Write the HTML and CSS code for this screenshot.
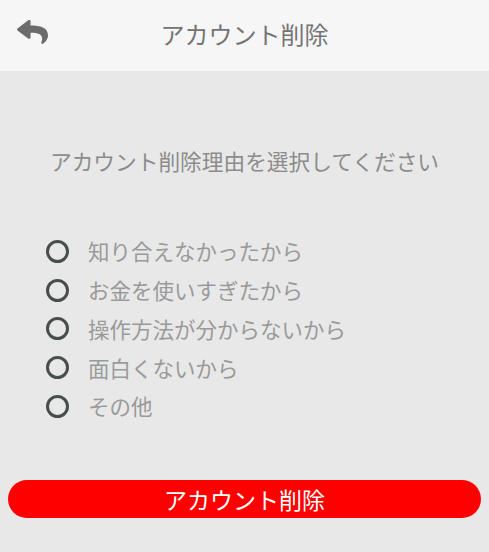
FILE: index.html
```html
<!DOCTYPE html>
<html lang="ja">
<head>
<meta charset="utf-8">
<link rel="stylesheet" href="styles.css">
</head>
<body>
<div class="app">
  <header class="header">
    <div class="back">
      <svg class="back-icon" viewBox="0 31 512 450" width="31" height="24" preserveAspectRatio="none" aria-hidden="true">
        <path fill="#6b6b6b" d="M8.309 189.836L184.313 37.851C199.719 24.546 224 35.347 224 56.015v80.053c160.629 1.839 288 34.032 288 186.258 0 61.441-39.581 122.309-83.333 154.132-13.653 9.931-33.111-2.533-28.077-18.631 45.344-145.012-21.507-183.51-176.59-185.742V360c0 20.7-24.3 31.453-39.687 18.164l-176.004-152c-11.071-9.562-11.086-26.753 0-36.328z"/>
      </svg>
    </div>
    <h1 class="title">アカウント削除</h1>
    <div class="spacer"></div>
  </header>
  <main class="content">
    <p class="prompt">アカウント削除理由を選択してください</p>
    <ul class="options">
      <li class="option"><span class="radio"></span><span class="label">知り合えなかったから</span></li>
      <li class="option"><span class="radio"></span><span class="label">お金を使いすぎたから</span></li>
      <li class="option"><span class="radio"></span><span class="label">操作方法が分からないから</span></li>
      <li class="option"><span class="radio"></span><span class="label">面白くないから</span></li>
      <li class="option"><span class="radio"></span><span class="label">その他</span></li>
    </ul>
    <button class="delete-btn" type="button">アカウント削除</button>
  </main>
</div>
</body>
</html>
```
FILE: styles.css
```css
* { box-sizing: border-box; }
html, body {
  margin: 0;
  padding: 0;
  height: 100%;
}
body {
  background: #e8e8e8;
  font-family: "Noto Sans CJK JP", "Noto Sans", sans-serif;
}
.app {
  display: flex;
  flex-direction: column;
  min-height: 552px;
}
.header {
  height: 71px;
  background: #f6f6f6;
  display: grid;
  grid-template-columns: 1fr auto 1fr;
  align-items: center;
}
.back {
  align-self: start;
  padding: 20px 0 0 17px;
  display: flex;
}
.back-icon { display: block; }
.title {
  margin: 0;
  font-size: 24px;
  font-weight: 400;
  color: #747474;
  line-height: 30px;
  margin-top: -4px;
}
.content {
  display: flex;
  flex-direction: column;
}
.prompt {
  margin: 75px 0 0;
  text-align: center;
  font-size: 21.7px;
  line-height: 30px;
  color: #8c8c8c;
}
.options {
  list-style: none;
  margin: 56px 0 0;
  padding: 0 0 0 46px;
}
.option {
  height: 38.75px;
  display: flex;
  align-items: center;
}
.radio {
  width: 23px;
  height: 23px;
  border: 3px solid #484d4d;
  border-radius: 50%;
  flex: none;
}
.label {
  margin-left: 19px;
  font-size: 21.5px;
  color: #9a9a9a;
  line-height: 30px;
}
.delete-btn {
  margin: 54px 8px 0;
  height: 38px;
  border: none;
  border-radius: 19px;
  background: #ff0000;
  color: #ffffff;
  font-family: inherit;
  font-size: 23px;
  line-height: 30px;
  padding: 0;
}
```
